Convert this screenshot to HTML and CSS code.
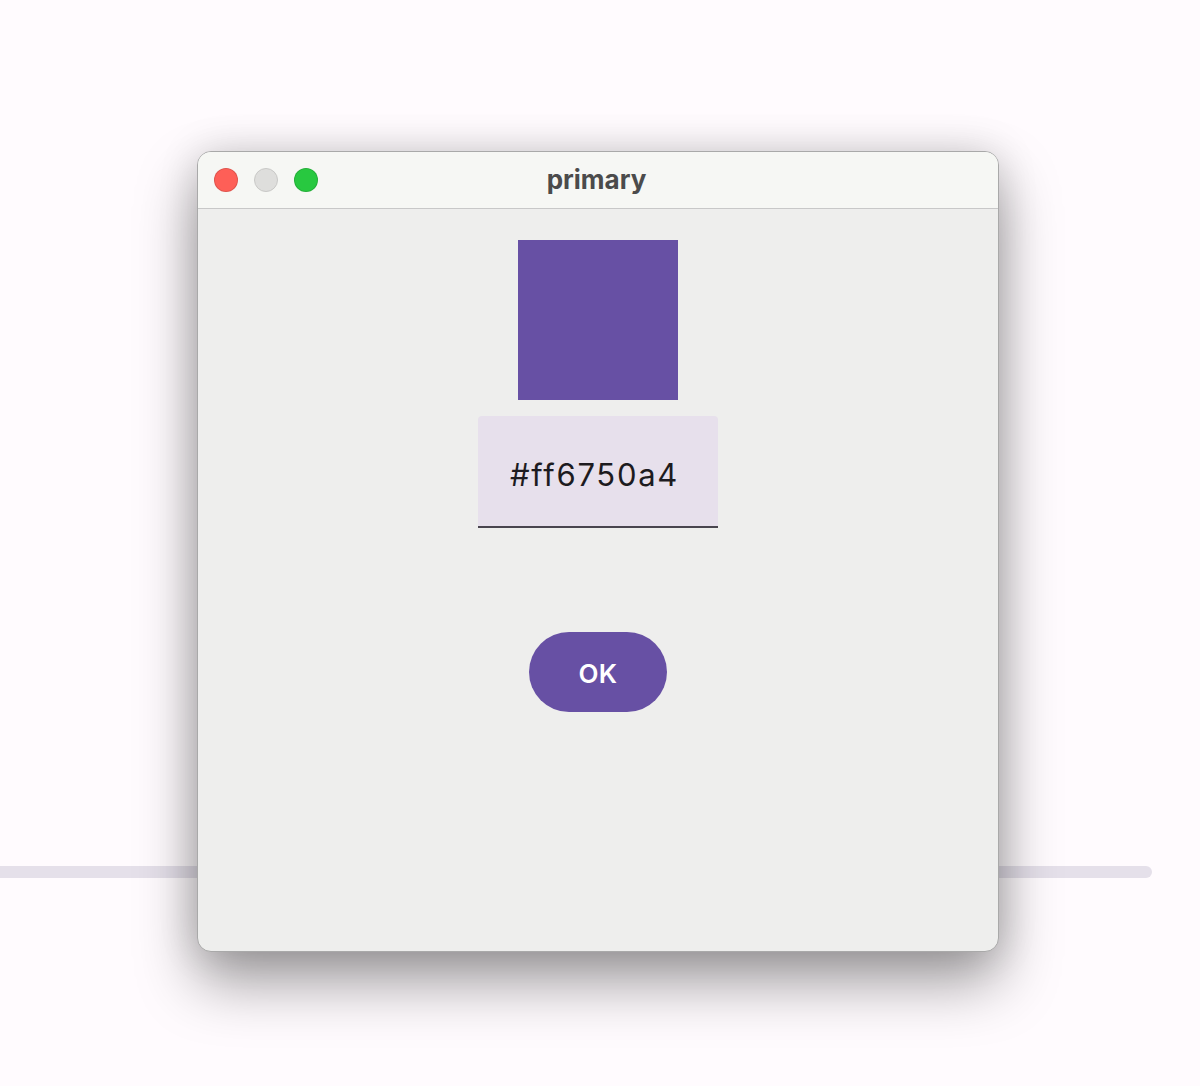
FILE: index.html
```html
<!DOCTYPE html>
<html>
<head>
<meta charset="utf-8">
<link rel="stylesheet" href="styles.css">
</head>
<body>
<div class="stage">
  <div class="track"></div>
  <div class="window">
    <div class="titlebar">
      <div class="lights">
        <span class="light red"></span>
        <span class="light gray"></span>
        <span class="light green"></span>
      </div>
      <div class="title">primary</div>
    </div>
    <div class="content">
      <div class="swatch"></div>
      <div class="field"><span class="value">#ff6750a4</span></div>
      <button class="ok">OK</button>
    </div>
  </div>
</div>
</body>
</html>
```
FILE: styles.css
```css
html, body {
  margin: 0;
  padding: 0;
  background: #fffbfe;
  font-family: Inter, "Noto Sans", sans-serif;
}
.stage {
  position: relative;
  width: 1200px;
  height: 1086px;
  overflow: hidden;
}
.track {
  position: absolute;
  left: 0;
  top: 866px;
  width: 1152px;
  height: 12px;
  background: #e5e0ea;
  border-radius: 0 6px 6px 0;
}
.window {
  position: absolute;
  left: 197px;
  top: 151px;
  width: 800px;
  height: 799px;
  border: 1px solid #a9a9a9;
  border-radius: 14px;
  background: #eeeeed;
  overflow: hidden;
  box-shadow: 0 30px 60px rgba(0,0,0,0.38), 0 0 40px rgba(0,0,0,0.14);
  display: flex;
  flex-direction: column;
}
.titlebar {
  height: 56px;
  flex: none;
  background: #f6f7f4;
  border-bottom: 1px solid #c8c8c8;
  position: relative;
  display: flex;
  align-items: center;
  justify-content: center;
}
.lights {
  position: absolute;
  left: 16px;
  top: 16px;
  display: flex;
  gap: 16px;
}
.light {
  width: 22px;
  height: 22px;
  border-radius: 50%;
  border: 1px solid rgba(0,0,0,0.12);
}
.red { background: #fe5f57; }
.gray { background: #dededc; border-color: #c8c8c6; }
.green { background: #28c840; }
.title {
  font-family: Inter, "Helvetica Neue", sans-serif;
  font-weight: 700;
  font-size: 26px;
  color: #4b4b4b;
  margin-left: -3px;
  margin-top: -2px;
}
.content {
  display: flex;
  flex-direction: column;
  align-items: center;
  padding-top: 31px;
}
.swatch {
  width: 160px;
  height: 160px;
  background: #6750a4;
}
.field {
  margin-top: 16px;
  width: 240px;
  height: 110px;
  background: #e7e0ec;
  border-radius: 4px 4px 0 0;
  border-bottom: 2px solid #49454f;
  box-sizing: content-box;
  display: flex;
  align-items: center;
}
.value {
  margin-left: 32px;
  margin-top: 6px;
  font-size: 31px;
  letter-spacing: 1.7px;
  color: #1d1b20;
}
.ok {
  margin-top: 104px;
  width: 138px;
  height: 80px;
  border: none;
  border-radius: 40px;
  background: #6750a4;
  color: #ffffff;
  font-family: Inter, sans-serif;
  font-weight: 600;
  font-size: 26px;
  letter-spacing: 0.4px;
  cursor: pointer;
  padding: 2px 0 0 0;
}
```
